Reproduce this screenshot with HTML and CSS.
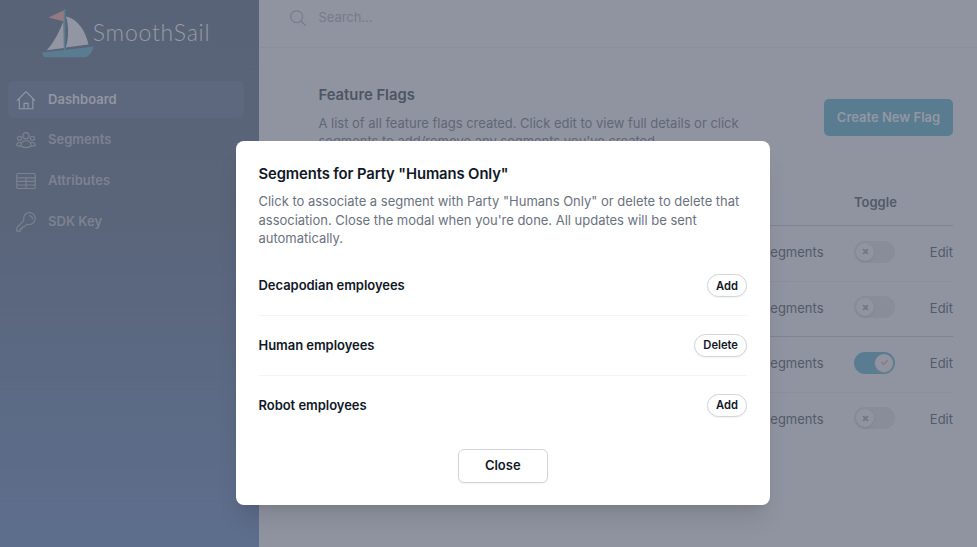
FILE: index.html
```html
<!DOCTYPE html>
<html lang="en">
<head>
<meta charset="utf-8">
<title>SmoothSail</title>
<link rel="stylesheet" href="styles.css">
</head>
<body>
<div class="app">
  <aside class="sidebar">
    <div class="logo">
      <svg class="boat" width="54" height="50" viewBox="0 0 54 50">
        <path d="M6.500 8.500 22 1.200V12.500Z" fill="#927a82"/>
        <path d="M21.500 12 22 39 4.800 41.300C13 32 17.500 22 21.500 12Z" fill="#9296a2"/>
        <path d="M24 7.500C36 10 43.500 22 46.500 35.500L23.800 38.500C26.800 30 26.800 16 24 7.500Z" fill="#9296a2"/>
        <path d="M21.800 0h1.600v41h-1.600Z" fill="#5a7c90"/>
        <path d="M0 43.500 52 37.500C50 43 47 48.300 42 48.300H3.500C1.500 48.300.2 46 0 43.500Z" fill="#5a7c90"/>
      </svg>
      <span class="brand">SmoothSail</span>
    </div>
    <nav class="nav">
      <a class="item active"><svg class="icon" viewBox="0 0 24 24"><path d="m1.500 12.500 10.500-10.500 10.500 10.500M4 10.500V22.500H20.200V10.500M9.700 22.500V16H14.500V22.500"/></svg><span>Dashboard</span></a>
      <a class="item"><svg class="icon" viewBox="0 0 24 24"><circle cx="12" cy="6.800" r="3.700"/><circle cx="4.300" cy="10" r="2.500"/><circle cx="19.700" cy="10" r="2.500"/><path d="M5.800 19.300C5.800 10.700 18.200 10.700 18.200 19.300 15 21.800 9 21.800 5.800 19.300ZM6.600 15.500C3.800 14.300 1 15.200.8 18.300 2.300 19.400 4 19.600 5.800 19.300M17.400 15.500C20.200 14.300 23 15.200 23.200 18.300 21.700 19.400 20 19.600 18.200 19.300"/></svg><span>Segments</span></a>
      <a class="item"><svg class="icon" viewBox="0 0 24 24"><rect x="1" y="3" width="22" height="18" rx="1.500"/><path d="M1 8.200H23M1 12.500H23M1 16.800H23M12 8.200V21"/></svg><span>Attributes</span></a>
      <a class="item"><svg class="icon" viewBox="0 0 24 24"><path d="M16 4.500A3.700 3.700 0 0 1 19.700 8.200M23 8.200A6.800 6.800 0 0 1 14.800 14.800C13.800 14.600 12.900 14.800 12.300 15.400L10 17.700H7.500V20H5.200V23H1V19.500C1 18.900 1.200 18.500 1.600 18L8.700 11C9.300 10.400 9.500 9.500 9.300 8.500A6.900 6.900 0 1 1 23 8.200Z"/></svg><span>SDK Key</span></a>
    </nav>
  </aside>
  <main class="main">
    <header class="topbar">
      <svg class="search-icon" viewBox="0 0 16 16"><circle cx="6.700" cy="6.700" r="6"/><path d="m11 11 4.500 4.500"/></svg>
      <span class="placeholder">Search...</span>
    </header>
    <section class="content">
      <div class="heading">
        <div class="intro">
          <h1>Feature Flags</h1>
          <p>A list of all feature flags created. Click edit to view full details or click<br>segments to add/remove any segments you've created.</p>
        </div>
        <button class="create">Create New Flag</button>
      </div>
      <div class="table">
        <div class="row head"><span></span><span>Toggle</span><span></span></div>
        <div class="row"><span>Segments</span><span class="switch"><i><svg viewBox="0 0 12 12"><path d="m4 4 4 4m0-4L4 8"/></svg></i></span><span class="edit">Edit</span></div>
        <div class="row strong"><span>Segments</span><span class="switch"><i><svg viewBox="0 0 12 12"><path d="m4 4 4 4m0-4L4 8"/></svg></i></span><span class="edit">Edit</span></div>
        <div class="row"><span>Segments</span><span class="switch on"><i><svg viewBox="0 0 12 12"><path d="m3 6 2 2 4-4"/></svg></i></span><span class="edit">Edit</span></div>
        <div class="row last"><span>Segments</span><span class="switch"><i><svg viewBox="0 0 12 12"><path d="m4 4 4 4m0-4L4 8"/></svg></i></span><span class="edit">Edit</span></div>
      </div>
    </section>
  </main>
</div>
<div class="modal" role="dialog">
  <h2>Segments for Party "Humans Only"</h2>
  <p>Click to associate a segment with Party "Humans Only" or delete to delete that<br>association. Close the modal when you're done. All updates will be sent<br>automatically.</p>
  <ul>
    <li><span>Decapodian employees</span><button class="pill">Add</button></li>
    <li><span>Human employees</span><button class="pill">Delete</button></li>
    <li><span>Robot employees</span><button class="pill">Add</button></li>
  </ul>
  <button class="close">Close</button>
</div>
</body>
</html>
```

FILE: styles.css
```css
* { box-sizing: border-box; }
body {
  margin: 0;
  height: 547px;
  overflow: hidden;
  position: relative;
  font: 13px/18.5px Inter, "Liberation Sans", sans-serif;
  background: #9094a0;
}
h1, h2, p, ul { margin: 0; padding: 0; }
button { font-family: inherit; padding: 0; }
svg { fill: none; stroke-linecap: round; stroke-linejoin: round; flex: none; }
.app { display: flex; height: 547px; }

.sidebar {
  width: 259px;
  padding: 0 15px 0 8px;
  background: linear-gradient(#596377 0%, #5a657a 40%, #5d6e8d 100%);
}
.logo { display: flex; height: 81px; padding: 8.500px 0 0 34.300px; }
.brand {
  margin-left: -3.500px;
  padding-top: 9.500px;
  font: 300 23px/28px Lato, sans-serif;
  letter-spacing: .780px;
  color: #979ba6;
}
.nav { display: flex; flex-direction: column; gap: 3.700px; }
.item {
  display: flex;
  align-items: center;
  gap: 12.500px;
  height: 37px;
  padding: 0 7.500px;
  border-radius: 6px;
  font-weight: 600;
  color: #7c8290;
}
.item span { padding-bottom: 1px; letter-spacing: .020px; }
.active { background: #5d687f; color: #9296a1; }
.active span { padding-bottom: 0; }
.icon { width: 20px; height: 20px; stroke: currentColor; stroke-width: 1.400; }

.main { flex: 1; }
.topbar {
  display: flex;
  height: 48px;
  padding: 10px 0 0 31px;
  border-bottom: 1px solid #8a8f9b;
}
.search-icon { width: 16px; height: 16px; stroke: #757b8a; stroke-width: 1.100; }
.placeholder { margin: -2px 0 0 12.500px; color: #757b8a; letter-spacing: -.050px; }
.content { padding: 37px 24px 0 59.500px; }
.heading { display: flex; justify-content: space-between; height: 94px; }
h1 { font-size: 14.800px; line-height: 20px; font-weight: 600; color: #4e5564; }
.intro p { margin-top: 8.500px; white-space: nowrap; color: #606776; letter-spacing: -.022px; }
.create {
  width: 129px;
  height: 37px;
  margin-top: 14px;
  padding-bottom: 2px;
  border: 0;
  border-radius: 5px;
  font-size: 13px;
  font-weight: 600;
  background: #5a7c90;
  color: #9397a3;
}
.row {
  display: grid;
  grid-template-columns: 1fr 41px 27.500px;
  column-gap: 30.500px;
  align-items: center;
  height: 55.500px;
  padding-bottom: 1.500px;
  color: #535a68;
  border-bottom: 1px solid #8b8f9c;
}
.row > span:first-child { text-align: right; }
.head { height: 47px; padding-bottom: 0; font-weight: 600; border-color: #7f8492; }
.strong { border-color: #7f8492; }
.last { border: 0; padding-bottom: 3px; }
.edit { text-align: right; }
.switch {
  display: flex;
  width: 41px;
  height: 22px;
  padding: 2px;
  border-radius: 11px;
  background: #888d99;
}
.row .switch { margin-top: -1.500px; }
.switch i { width: 18px; height: 18px; border-radius: 9px; background: #9094a0; box-shadow: 0 1px 2px #7d8290; }
.switch svg { display: block; width: 11px; height: 11px; margin: 3.500px; stroke: #6f7684; stroke-width: 2; }
.switch.on { justify-content: flex-end; background: #5a7c90; }
.on svg { stroke: #927a82; stroke-width: 1.700; }

.modal {
  position: absolute;
  left: 236px;
  top: 141px;
  width: 534px;
  height: 364px;
  padding: 23px 23px 0 22.500px;
  border-radius: 8px;
  background: #fff;
  color: #111827;
  box-shadow: 0 18px 23px -5px rgba(0, 0, 0, .1), 0 7px 9px -6px rgba(0, 0, 0, .1);
}
h2 { font-size: 14.800px; line-height: 20px; font-weight: 600; letter-spacing: -.100px; }
.modal p { margin-top: 8px; white-space: nowrap; color: #6b7280; letter-spacing: -.015px; }
ul { list-style: none; margin-top: 8.800px; }
li {
  display: flex;
  justify-content: space-between;
  align-items: center;
  height: 59.800px;
  border-bottom: 1px solid #f3f4f6;
  font-weight: 600;
  letter-spacing: -.040px;
}
li > span { padding-bottom: 1px; }
li:last-child { border: 0; padding-bottom: 1px; }
.pill {
  height: 22.500px;
  padding: 0 8px;
  border: 1px solid #d1d5db;
  border-radius: 11.500px;
  background: #fff;
  font-size: 11.200px;
  font-weight: 600;
  color: #111827;
  box-shadow: 0 1px 2px rgba(0, 0, 0, .05);
}
.close {
  display: block;
  width: 90px;
  height: 34px;
  margin: 13.200px auto 0;
  padding-bottom: 2px;
  border: 1px solid #d1d5db;
  border-radius: 6px;
  background: #fff;
  font-size: 13px;
  font-weight: 600;
  color: #111827;
  box-shadow: 0 1px 2px rgba(0, 0, 0, .05);
}
```
